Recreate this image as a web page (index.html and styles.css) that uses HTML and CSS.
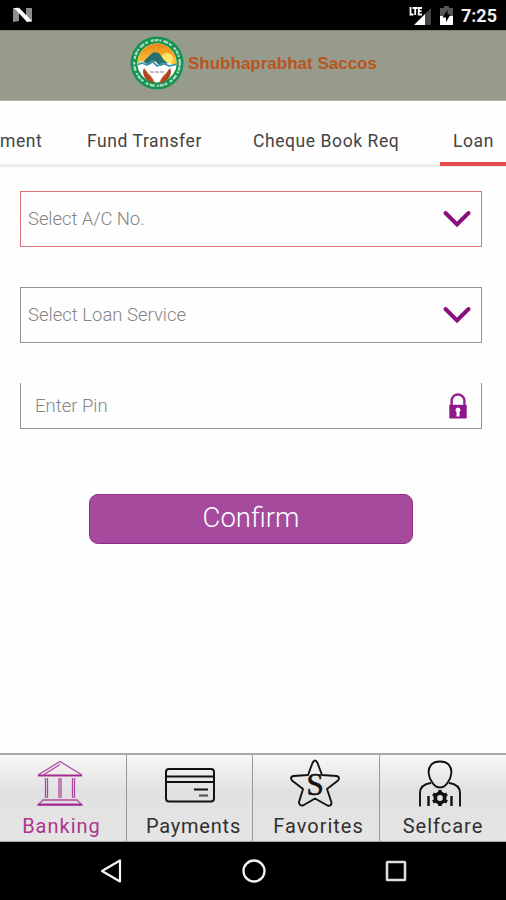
FILE: index.html
```html
<!DOCTYPE html>
<html lang="en">
<head>
<meta charset="utf-8">
<meta name="viewport" content="width=device-width">
<title>Shubhaprabhat Saccos</title>
<link rel="stylesheet" href="styles.css">
</head>
<body>
<div class="phone">
  <div class="status">
    <svg class="status-n" width="20" height="16" viewBox="0 0 20 16"><path fill="#8d8d8d" d="M0 1v14l6-1V1zM19 1v14l-6-1V1z"/><path fill="#fff" d="M1 1l5-.3L19 14l-5 1z"/></svg>
    <div class="status-right">
      <svg width="24" height="20" viewBox="0 0 24 20"><path fill="#444" d="M22 2v17h-6V8z"/><path fill="#fff" d="M16 8v11H5z"/><path fill="none" stroke="#fff" stroke-width="1.800" d="M1.500 1v7.500h3M3.500 2h5M6.200 2v7M13 2H9.700v6.500H13M9.700 5.200H12.500"/></svg>
      <svg class="battery" width="13" height="19" viewBox="0 0 13 19"><path fill="#555" d="M4 0h5v2h4v9H0V2h4z"/><path fill="#fff" d="M0 10h13v9H0z"/><path fill="#000" d="M7.500 4L2.500 11.500h3.500V16l4.500-7.500H7.500z"/></svg>
      <span class="clock">7:25</span>
    </div>
  </div>
  <header class="brand">
    <svg class="brand-logo" width="54" height="54" viewBox="0 0 54 54">
      <defs><clipPath id="disc"><circle cx="27" cy="27" r="19.500"/></clipPath>
      <linearGradient id="sky" x2="0" y2="1"><stop offset="0.150" stop-color="#e77d12"/><stop offset="1" stop-color="#ffc93c"/></linearGradient></defs>
      <circle cx="27" cy="27" r="26.500" fill="#179351"/>
      <circle cx="27" cy="27" r="22.800" fill="none" stroke="#e4f4e8" stroke-width="2.200" stroke-dasharray="3 .8 4 1 2 2.200 5 1.400 3 3" opacity=".75" pathLength="144"/>
      <g clip-path="url(#disc)">
        <path fill="#fff" d="M0 0h54v54H0z"/>
        <path fill="url(#sky)" d="M0 0h54v29H0z"/>
        <circle cx="37" cy="23" r="6" fill="#ffe66b"/>
        <path fill="#28706d" d="M12 27l8-8 4-3 5 1 5 7 6 5-13 3z"/>
        <path fill="#fff" d="M5 29l7-4 7 4 6-4 5 5 8-3 12 3v5H5z"/>
        <path fill="none" stroke="#3894aa" stroke-width="1.800" d="M7 29l5-2 5 2 5-4 5 5 6-3 6 3 8-2"/>
        <path fill="none" stroke="#aaa" stroke-width="1.500" stroke-dasharray="4 1" d="M20 36h14"/>
      </g>
      <path fill="#ad451d" d="M14 32l3 4 4 4 4 7c-8-1-12-6-12-12zM40 32l-3 4-4 4-4 7c8-1 12-6 12-12z"/>
      <path fill="none" stroke="#db7d53" stroke-width="1" d="M17 37l5 5 2 4M37 37l-5 5-2 4"/>
    </svg>
    <span class="brand-name">Shubhaprabhat Saccos</span>
  </header>
  <nav class="tabs">
    <span class="tab tab-cut"><span>ment</span></span>
    <span class="tab tab-fund"><span>Fund Transfer</span></span>
    <span class="tab tab-cheque"><span>Cheque Book Req</span></span>
    <span class="tab tab-loan"><span>Loan</span></span>
  </nav>
  <main class="form">
    <div class="field field-active"><span class="account">Select A/C No.</span>
      <svg width="30" height="18" viewBox="0 0 30 18"><path fill="none" stroke="#87107d" stroke-width="4" stroke-linecap="round" d="M3.500 3L15 14.500l11.500-11.500"/></svg></div>
    <div class="field"><span class="service">Select Loan Service</span>
      <svg width="30" height="18" viewBox="0 0 30 18"><path fill="none" stroke="#87107d" stroke-width="4" stroke-linecap="round" d="M3.500 3L15 14.500l11.500-11.500"/></svg></div>
    <div class="field field-pin"><span class="pin">Enter Pin</span>
      <svg width="18" height="26" viewBox="0 0 18 26"><path fill="none" stroke="#92208b" stroke-width="2.400" d="M2.600 13V7.500a6.400 6 0 0 1 12.800 0V13"/><path fill="#8f158b" d="M.3 11.800h17.400V25.500H.3z"/><path fill="#fff" d="M9 14.500a2.500 2.500 0 0 1 1.500 4.500v4.500h-3V19A2.500 2.500 0 0 1 9 14.500z"/></svg></div>
    <button class="confirm"><span>Confirm</span></button>
  </main>
  <nav class="menu">
    <div class="item item-on">
      <svg width="52" height="50" viewBox="0 0 52 50"><g fill="none" stroke="#b04a9f" stroke-width="1.300"><path d="M4 17L26 3.500l22 13.500M10 16.500L26 6.500M11.500 20v20M13.500 20v20M25 20v20M27 20v20M38.500 20v20M40.500 20v20M9 42h34l5 5H4z"/><path stroke="#a62a93" stroke-width="2.200" d="M4 17.500h44M4 46.500h44"/></g></svg>
      <span class="label-banking">Banking</span>
    </div>
    <div class="item item-pay">
      <svg width="52" height="50" viewBox="0 0 52 50"><rect x="2" y="11" width="48" height="32.500" rx="3" fill="none" stroke="#111" stroke-width="2"/><path fill="none" stroke="#111" stroke-width="2" d="M2 18.500h48M2 24h48M30 31.500h14"/><path stroke="#555" stroke-width="2.200" d="M35 37.500h9"/></svg>
      <span class="label-payments">Payments</span>
    </div>
    <div class="item item-fav">
      <svg width="52" height="50" viewBox="0 0 52 50"><path fill="none" stroke="#111" stroke-width="1.900" stroke-linejoin="round" d="M22.500 5Q25 0 27.500 5L32 17l14.500 1q4 1 1.500 4.500L37 31l4.500 13.500q0 4-4 3L25 40.500l-12 7q-4 .5-4-3.500L13 31 2 22.500Q-.5 19 3.500 18L18 17z"/><text x="25" y="36.500" class="star-s">S</text></svg>
      <span class="label-favorites">Favorites</span>
    </div>
    <div class="item item-care">
      <svg width="52" height="50" viewBox="0 0 52 50"><g fill="none" stroke="#111" stroke-width="1.900"><path d="M26 3.500c8 0 12 5 11.300 12C36.500 23 31 29.500 26 29.500S15.500 23 14.700 15.500C14 8.500 18 3.500 26 3.500zM6 48.500V35c0-6 4-9 11-10M46 48.500V35c0-6-4-9-11-10"/><path stroke-width="2.400" d="M14.500 38v10M37.500 38v10"/></g><circle cx="26" cy="40" r="4.700" fill="none" stroke="#111" stroke-width="3.600"/><path stroke="#111" stroke-width="3.600" d="M26 32v4M26 44v4M19 36l3.500 2M29.500 42l3.500 2M33 36l-3.500 2M22.500 42L19 44"/></svg>
      <span class="label-selfcare">Selfcare</span>
    </div>
  </nav>
  <div class="android">
    <svg width="24" height="28" viewBox="0 0 24 28"><path fill="none" stroke="#f5f5f5" stroke-width="2.200" stroke-linejoin="round" d="M21 3.500v21L3 14z"/></svg>
    <svg width="28" height="28" viewBox="0 0 28 28"><circle cx="14" cy="14" r="10.500" fill="none" stroke="#f5f5f5" stroke-width="2.300"/></svg>
    <svg width="24" height="28" viewBox="0 0 24 28"><rect x="3" y="5" width="18" height="18" rx=".5" fill="none" stroke="#ddd" stroke-width="2.600"/></svg>
  </div>
</div>
</body>
</html>
```
FILE: styles.css
```css
* { box-sizing: border-box; }
body { margin: 0; background: #fff; font-family: Roboto, "Liberation Sans", sans-serif; }
svg { display: block; flex: none; }
.phone { width: 506px; height: 900px; display: flex; flex-direction: column; overflow: hidden; background: #fefefe; }
.status { height: 30px; background: #000; display: flex; justify-content: space-between; align-items: flex-start; padding: 7px 9px 0 13px; }
.status-right { display: flex; margin-top: -1px; }
.battery { margin-left: 7px; }
.clock { margin-left: 8px; color: #eee; font-size: 18px; line-height: 20px; font-weight: 700; }
.brand { height: 71px; background: #969b8c; border-top: 1px solid #7e8277; border-bottom: 1px solid #b2b5aa; display: flex; padding: 5px 0 0 130px; }
.brand-name { margin: 17px 0 0 4px; font: bold 17px/22px "Liberation Sans", sans-serif; color: #b95620; white-space: nowrap; }
.tabs { height: 66px; display: flex; border-bottom: 3px solid #ededed; color: #444; font-size: 17.500px; line-height: 22px; letter-spacing: .58px; }
.tab { height: 65px; padding-top: 29px; white-space: nowrap; flex: none; }
.tab-cut { width: 73px; }
.tab-fund { width: 167px; padding-left: 14px; }
.tab-cheque { width: 200px; padding-left: 13px; }
.tab-loan { width: 66px; padding-left: 13px; border-bottom: 4px solid #e64c4e; }
.form { flex: 1; padding: 24px 24px 0 20px; display: flex; flex-direction: column; }
.field { height: 56px; margin-bottom: 40px; border: 1.500px solid #939393; display: flex; align-items: center; justify-content: space-between; padding: 0 9px 0 7px; color: #858585; font-size: 18.500px; font-weight: 300; white-space: nowrap; }
.account { letter-spacing: -.08px; }
.field-active { border-color: #df7276; }
.field-pin { height: 46px; border-top: 0; padding: 1px 14px 0 14px; margin-bottom: 65px; }
.confirm { width: 324px; height: 50px; margin-left: 69px; border: 1px solid #8f2d89; border-radius: 9px; background: #a54a9c; color: #fff; font: 300 27.500px/46px Roboto, sans-serif; padding: 0; display: flex; justify-content: center; }
.menu { height: 89px; border-top: 2px solid #aaa; border-bottom: 1px solid #a3a3a3; background: linear-gradient(#f7f7f7, #e1e1e1 42%, #e5e5e5); display: grid; grid-template-columns: 127px 126px 127px 126px; }
.item { border-right: 1px solid #999; display: flex; flex-direction: column; align-items: center; padding-top: 3px; color: #303030; font-size: 20px; line-height: 26px; letter-spacing: 1px; white-space: nowrap; }
.item:last-child { border-right: 0; }
.item span { margin-top: 5px; }
.item svg { height: 50px; }
.item-on { color: #ae358f; padding-right: 3px; }
.item-on svg { margin-left: -4px; }
.item-pay span { letter-spacing: .8px; margin-left: 8px; }
.item-fav span { margin-left: 5px; }
.item-care svg { margin-left: -6px; }
.star-s { font: 31px "Liberation Serif", serif; letter-spacing: 0; text-anchor: middle; fill: #111; stroke: #111; stroke-width: .6px; }
.android { height: 58px; background: #000; display: flex; justify-content: space-between; align-items: center; padding: 0 98px 0 99px; }
```
